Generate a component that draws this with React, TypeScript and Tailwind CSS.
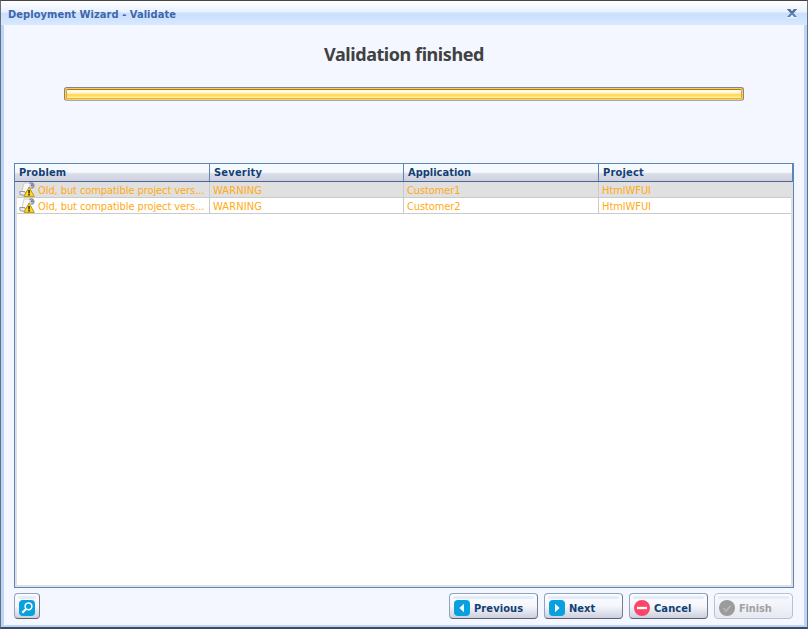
import React from 'react';

const UI = "font-['DejaVu_Sans_Condensed','DejaVu_Sans',sans-serif] [font-stretch:condensed]";

function WarningIcon() {
  return (
    <svg width="16" height="16" viewBox="0 0 16 16" className="block shrink-0">
      <path d="M5 1h7l-1.5 4L6 12H2.5z" fill="#f8f8fb" stroke="#c3c3ca" strokeWidth=".8" />
      <path d="M.8 9.5h5l1 3.7H3q-3 0-2.2-3.7z" fill="#e6e9ef" stroke="#8a8f9c" strokeWidth=".9" />
      <path d="M10.5 1.5q2.5-1.5 4 .5t-1 4h-2" fill="#c3cad8" stroke="#7d8596" strokeWidth="1.1" />
      <circle cx="13" cy="3.2" r="1" fill="#626b7e" />
      <path d="M10 5.2 5 14.4h10.3z" fill="#ffdc20" stroke="#c29507" strokeLinejoin="round" />
      <path d="M9.3 8h1.5v3.4H9.3zM9.3 12h1.5v1.4H9.3z" fill="#222" />
    </svg>
  );
}

type Glyph = 'search' | 'prev' | 'next' | 'cancel' | 'finish';

function ButtonIcon({ type }: { type: Glyph }) {
  return (
    <svg width="16" height="16" viewBox="0 0 16 16" className="block shrink-0">
      {type === 'cancel' || type === 'finish' ? (
        <circle cx="8" cy="8" r="8" fill={type === 'cancel' ? '#fc4568' : '#9b9b9b'} />
      ) : (
        <rect width="16" height="16" rx="4" fill="#07a1df" />
      )}
      {type === 'prev' && <path d="M10 3.8v8.4L5.4 8z" fill="#fff" />}
      {type === 'next' && <path d="M6 3.8v8.4L10.6 8z" fill="#fff" />}
      {type === 'cancel' && <path d="M3 6.8h10v2.4H3z" fill="#fff" />}
      {type === 'finish' && <path d="m4.3 8 2.8 3 4.7-5.5" fill="none" stroke="#b7b7b7" strokeWidth="1.5" />}
      {type === 'search' && (
        <g fill="none" stroke="#fff">
          <circle cx="9.5" cy="6.3" r="3.4" strokeWidth="1.5" />
          <path d="m7.2 8.8-3.9 3.9" strokeWidth="2.1" />
        </g>
      )}
    </svg>
  );
}

function WizardButton({ type, label, width, disabled = false, spacing = '' }: { type: Glyph; label?: string; width: string; disabled?: boolean; spacing?: string }) {
  return (
    <button
      disabled={disabled}
      aria-label={label ?? 'Search'}
      className={`relative flex h-[26px] items-center rounded-[4px] border pl-1 pt-[3px] text-[11px] font-bold leading-4 ${width} ${disabled ? 'border-[#b9c0cf] bg-linear-to-b from-[#fbfcff] to-[#e7e9f2] text-[#a1a1a1]' : 'border-[#91a3be] border-b-[#59606e] border-r-[#707d92] bg-linear-to-b from-[#fbfcff] via-[#f5f7fc] to-[#cdd0de] text-[#123e72]'}`}
    >
      <span className="absolute left-[3px] right-[3px] top-[2px] h-[3px] rounded-sm bg-[#e2edf9]" />
      <ButtonIcon type={type} />
      {label && <span className={`ml-1 pt-[2px] ${spacing}`}>{label}</span>}
    </button>
  );
}

const headers = ['Problem', 'Severity', 'Application', 'Project'];
const headerSpacing = ['tracking-[0.1px]', 'tracking-[0.2px]', 'tracking-[0px]', 'tracking-[0.2px]'];
const rows = [
  ['Old, but compatible project vers...', 'WARNING', 'Customer1', 'HtmlWFUI'],
  ['Old, but compatible project vers...', 'WARNING', 'Customer2', 'HtmlWFUI'],
];
const cellSpacing = ['tracking-[-0.08px]', 'tracking-[0.1px]', 'tracking-[-0.1px]', 'tracking-[-0.05px]'];

export default function App() {
  return (
    <div className={`flex h-[629px] w-[808px] flex-col overflow-hidden border border-[#6a6e77] border-b-2 border-t-[#454343] border-b-[#3e4a61] bg-[#bad5fb] ${UI}`}>
      <header className="flex h-6 shrink-0 items-center justify-between bg-[linear-gradient(#fff_0%,#e9f1fe_46%,#c9dfff_50%,#d8e8ff_100%)] pl-[7px] pr-[10px]">
        <h1 className="pt-[3px] text-[11px] font-bold leading-[17px] tracking-[0.06px] text-[#3d67ac]">Deployment Wizard - Validate</h1>
        <svg width="10" height="9" viewBox="0 0 10 9">
          <path d="M0 9h3l2-2 2 2h3" fill="none" stroke="#fff" />
          <path d="M0 0h3l2 2.5L7 0h3L6.5 4 10 8H7L5 5.5 3 8H0l3.5-4z" fill="#6085b8" />
          <path d="M0 0h3l2 2.5L7 0h3L6.5 4h-3z" fill="#5c6e8b" />
        </svg>
      </header>
      <main className="mx-[3px] mb-[2px] flex min-h-0 flex-1 flex-col bg-[#f4f7ff] px-[10px]">
        <h2 className="mt-[17px] h-[25px] text-center font-['Noto_Sans','Open_Sans',sans-serif] text-[18px] font-bold leading-6 tracking-[-0.44px] text-[#414141]">Validation finished</h2>
        <div className="mx-[50px] mt-5 h-[14px] rounded-[3px] border border-[#85838d] border-b-[#aaa9ae] bg-[#ffce4a] p-px">
          <div className="h-full rounded-[2px] border border-[#a67a2e] border-x-[#d9a544] border-b-[#e5b440] bg-[linear-gradient(#fffdf4_0%,#fffae5_25%,#fff2c4_40%,#ffdc68_52%,#ffd750_65%,#ffe784_88%,#fff8d8_100%)]" />
        </div>
        <section className="mt-[62px] h-[425px] border border-[#5d86b8]">
          <div className="grid h-[18px] grid-cols-[195px_194px_195px_1fr] border-b border-r border-b-[#4b6692] border-r-[#5d86b8] bg-[linear-gradient(#f6fbff_0%,#f5f9fe_48%,#d9dde8_58%,#cfd2de_100%)]">
            {headers.map((h, i) => (
              <div key={h} className={`flex h-[17px] items-start pl-1 pt-px text-[11px] font-bold leading-4 text-[#123f75] ${headerSpacing[i]} ${i < 3 ? 'border-r border-[#5d86b8]' : ''}`}>{h}</div>
            ))}
          </div>
          <div className="h-[405px] border-x-2 border-b-2 border-[#e0e0e0] bg-white">
            {rows.map((row, r) => (
              <div key={r} className={`grid h-4 grid-cols-[193px_194px_195px_1fr] ${r === 0 ? 'bg-[#e0e0e0]' : ''}`}>
                {row.map((text, i) => (
                  <div key={i} className={`flex h-4 min-w-0 items-start whitespace-nowrap border-b border-[#cacaca] text-[11px] leading-4 text-[#ffaa12] ${i < 3 ? 'border-r' : ''} ${i === 0 ? 'gap-[3px] pl-[2px]' : 'pl-[3px]'}`}>
                    {i === 0 && <WarningIcon />}
                    <span className={`pt-px ${cellSpacing[i]}`}>{text}</span>
                  </div>
                ))}
              </div>
            ))}
          </div>
        </section>
        <footer className="mt-[5px] flex justify-between pr-px">
          <WizardButton type="search" width="w-[26px]" />
          <div className="flex gap-[6px]">
            <WizardButton type="prev" label="Previous" width="w-[89px]" spacing="tracking-[0.1px]" />
            <WizardButton type="next" label="Next" width="w-[79px]" />
            <WizardButton type="cancel" label="Cancel" width="w-[79px]" spacing="tracking-[0.1px]" />
            <WizardButton type="finish" label="Finish" width="w-[79px]" disabled spacing="tracking-[-0.15px]" />
          </div>
        </footer>
      </main>
    </div>
  );
}
